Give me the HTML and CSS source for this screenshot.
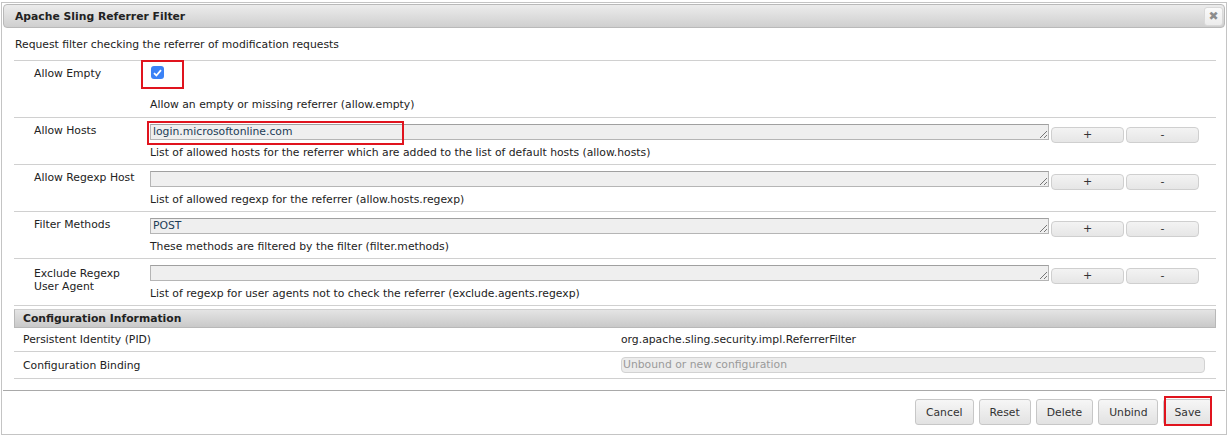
FILE: index.html
```html
<!DOCTYPE html>
<html>
<head>
<meta charset="utf-8">
<link rel="stylesheet" href="styles.css">
</head>
<body>
<div class="dialog">
  <div class="titlebar">
    <span class="title">Apache Sling Referrer Filter</span>
    <span class="close">&#x2716;</span>
  </div>
  <div class="body">
    <div class="intro">Request filter checking the referrer of modification requests</div>
    <div class="props">
      <div class="row row-first">
        <div class="label">Allow Empty</div>
        <div class="value">
          <div class="checkwrap"><span class="checkbox"><svg width="9" height="8" viewBox="0 0 9 8"><path d="M1 4.2 L3.4 6.5 L8 1.2" fill="none" stroke="#fff" stroke-width="1.8"/></svg></span></div>
          <div class="desc desc-first">Allow an empty or missing referrer (allow.empty)</div>
        </div>
      </div>
      <div class="row">
        <div class="label">Allow Hosts</div>
        <div class="value">
          <div class="field">
            <div class="textarea">login.microsoftonline.com<span class="grip"></span></div>
            <span class="btn">+</span><span class="btn">-</span>
          </div>
          <div class="desc">List of allowed hosts for the referrer which are added to the list of default hosts (allow.hosts)</div>
        </div>
      </div>
      <div class="row">
        <div class="label">Allow Regexp Host</div>
        <div class="value">
          <div class="field">
            <div class="textarea"><span class="grip"></span></div>
            <span class="btn">+</span><span class="btn">-</span>
          </div>
          <div class="desc">List of allowed regexp for the referrer (allow.hosts.regexp)</div>
        </div>
      </div>
      <div class="row">
        <div class="label">Filter Methods</div>
        <div class="value">
          <div class="field">
            <div class="textarea">POST<span class="grip"></span></div>
            <span class="btn">+</span><span class="btn">-</span>
          </div>
          <div class="desc">These methods are filtered by the filter (filter.methods)</div>
        </div>
      </div>
      <div class="row">
        <div class="label label-two">Exclude Regexp<br>User Agent</div>
        <div class="value">
          <div class="field">
            <div class="textarea"><span class="grip"></span></div>
            <span class="btn">+</span><span class="btn">-</span>
          </div>
          <div class="desc">List of regexp for user agents not to check the referrer (exclude.agents.regexp)</div>
        </div>
      </div>
    </div>
    <div class="info-head">Configuration Information</div>
    <div class="info-row">
      <div class="info-label">Persistent Identity (PID)</div>
      <div class="info-value">org.apache.sling.security.impl.ReferrerFilter</div>
    </div>
    <div class="info-row info-row2">
      <div class="info-label">Configuration Binding</div>
      <div class="info-value"><div class="binding">Unbound or new configuration</div></div>
    </div>
  </div>
  <div class="footer">
    <span class="fbtn">Cancel</span>
    <span class="fbtn">Reset</span>
    <span class="fbtn">Delete</span>
    <span class="fbtn">Unbind</span>
    <span class="fbtn">Save</span>
  </div>
  <span class="hl hl-check"></span>
  <span class="hl hl-hosts"></span>
  <span class="hl hl-save"></span>
</div>
</body>
</html>
```
FILE: styles.css
```css
html, body {
  margin: 0;
  padding: 0;
  background: #fff;
}
body {
  font-family: "DejaVu Sans", Verdana, sans-serif;
  font-size: 10.8px;
  color: #222;
}
.dialog {
  position: relative;
  margin: 2px 0 0 1px;
  width: 1226px;
  height: 433px;
  border: 1px solid #c4c4c4;
  padding: 1px;
  box-sizing: border-box;
}
.titlebar {
  height: 24px;
  box-sizing: border-box;
  border: 1px solid #b9b9b9;
  border-radius: 4px;
  background: linear-gradient(#ececec, #cfcfcf);
  display: flex;
  align-items: center;
  justify-content: space-between;
  padding: 0 1px 0 11px;
}
.title {
  font-weight: bold;
  font-size: 10.8px;
  color: #222;
}
.close {
  width: 19px;
  height: 19px;
  box-sizing: border-box;
  border: 1px solid #d9d9d9;
  border-radius: 3px;
  background: linear-gradient(#fafafa, #ececec);
  color: #8c8c8c;
  font-size: 12px;
  font-weight: bold;
  display: flex;
  align-items: center;
  justify-content: center;
}
.body {
  padding: 0 9px 0 11px;
}
.intro {
  padding: 10px 0 8px 1px;
  line-height: 14px;
}
.props {
  border-top: 1px solid #d0d0d0;
}
.row {
  display: grid;
  grid-template-columns: 136px 1fr;
  border-bottom: 1px solid #d0d0d0;
  height: 46px;
}
.row-first {
  height: 56px;
}
.label {
  padding: 6px 0 0 20px;
  line-height: 14px;
}
.row-first .label {
  padding-top: 6px;
}
.label-two {
  line-height: 13px;
  padding-top: 8px;
}
.value {
  padding-top: 6px;
}
.row-first .value {
  padding-top: 5px;
}
.checkwrap {
  height: 13px;
  padding-left: 1px;
}
.checkbox {
  display: flex;
  align-items: center;
  justify-content: center;
  width: 13px;
  height: 13px;
  border-radius: 3px;
  background: #3b82f6;
  box-sizing: border-box;
}
.desc {
  line-height: 14px;
  margin-top: 3px;
}
.desc-first {
  margin-top: 19px;
}
.field {
  display: flex;
  align-items: flex-start;
  height: 19px;
}
.textarea {
  position: relative;
  width: 899px;
  height: 16px;
  box-sizing: border-box;
  background: #efefef;
  border: 1px solid #b5b5b5;
  border-top-color: #a0a0a0;
  padding: 0 2px;
  line-height: 14px;
  color: #1c3d57;
}
.grip {
  position: absolute;
  right: 1px;
  bottom: 1px;
  width: 7px;
  height: 7px;
  background: linear-gradient(135deg, transparent 45%, #777 45%, #777 55%, transparent 55%, transparent 75%, #777 75%, #777 85%, transparent 85%);
}
.btn {
  margin-top: 3px;
  margin-left: 2px;
  width: 73px;
  height: 16px;
  box-sizing: border-box;
  border: 1px solid #cfcfcf;
  border-radius: 4px;
  background: linear-gradient(#f3f3f3, #e6e6e6);
  display: flex;
  align-items: center;
  justify-content: center;
  color: #333;
  font-size: 11px;
  line-height: 14px;
}
.btn + .btn {
  margin-left: 2px;
}
.info-head {
  margin-top: 3px;
  height: 19px;
  box-sizing: border-box;
  width: 1202px;
  border: 1px solid #b8b8b8;
  border-top-color: #cfcfcf;
  background: linear-gradient(#e4e4e4, #c9c9c9);
  font-weight: bold;
  padding-left: 8px;
  line-height: 17px;
  color: #222;
}
.info-row {
  display: grid;
  grid-template-columns: 598px 1fr;
  height: 23px;
  border-bottom: 1px solid #d0d0d0;
  align-items: center;
  padding-left: 9px;
}
.info-row2 {
  height: 26px;
}
.binding {
  width: 584px;
  height: 16px;
  box-sizing: border-box;
  border: 1px solid #d2d2d2;
  border-radius: 4px;
  background: #ececec;
  color: #9a9a9a;
  line-height: 14px;
  padding-left: 1px;
}
.footer {
  margin-top: 11px;
  border-top: 1px solid #a9a9a9;
  display: flex;
  justify-content: flex-end;
  gap: 5px;
  padding: 8px 13px 0 0;
}
.fbtn {
  height: 26px;
  box-sizing: border-box;
  border: 1px solid #c7c7c7;
  border-radius: 3px;
  background: linear-gradient(#f6f6f6, #e2e2e2);
  color: #333;
  padding: 0 10px;
  display: flex;
  align-items: center;
  font-size: 10.8px;
}
.hl {
  position: absolute;
  border: 2px solid #e0141e;
  box-sizing: border-box;
}
.hl-check {
  left: 139px;
  top: 57px;
  width: 43px;
  height: 29px;
}
.hl-hosts {
  left: 145px;
  top: 118px;
  width: 257px;
  height: 24px;
}
.hl-save {
  left: 1162px;
  top: 393px;
  width: 48px;
  height: 30px;
}
```
